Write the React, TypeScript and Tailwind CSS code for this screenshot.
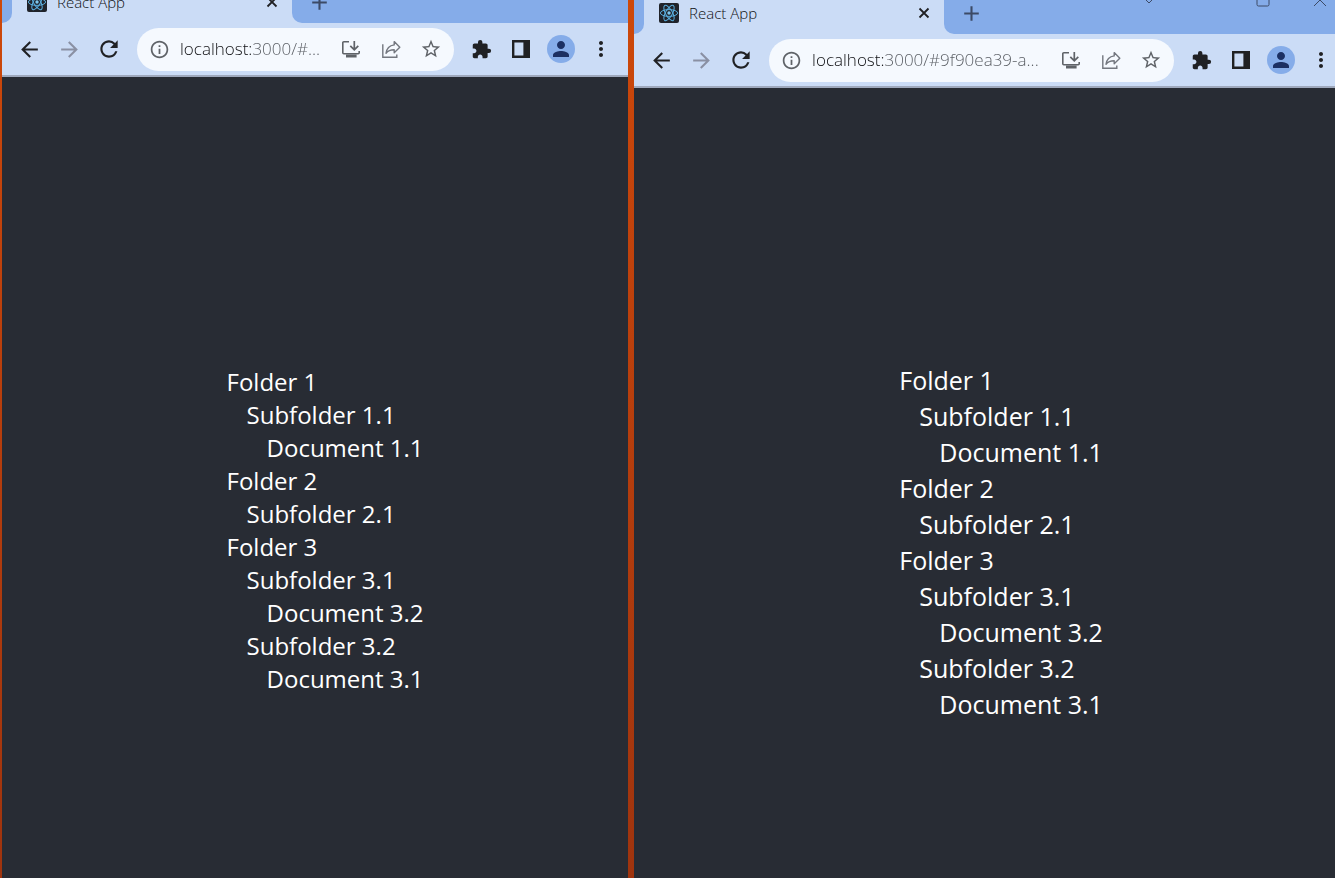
import type { ReactNode } from "react";
import {
  MdAdd,
  MdArrowBack,
  MdArrowForward,
  MdExtension,
  MdInfoOutline,
  MdMoreVert,
  MdPerson,
  MdRefresh,
  MdStarBorder,
} from "react-icons/md";

type Item = { name: string; children?: Item[] };

const tree: Item[] = [
  {
    name: "Folder 1",
    children: [{ name: "Subfolder 1.1", children: [{ name: "Document 1.1" }] }],
  },
  { name: "Folder 2", children: [{ name: "Subfolder 2.1" }] },
  {
    name: "Folder 3",
    children: [
      { name: "Subfolder 3.1", children: [{ name: "Document 3.2" }] },
      { name: "Subfolder 3.2", children: [{ name: "Document 3.1" }] },
    ],
  },
];

function Tree({ items, nested = false }: { items: Item[]; nested?: boolean }) {
  return (
    <ul className={nested ? "pl-5" : ""}>
      {items.map((item) => (
        <li key={item.name}>
          {item.name}
          {item.children && <Tree items={item.children} nested />}
        </li>
      ))}
    </ul>
  );
}

function ReactLogo() {
  return (
    <svg viewBox="0 0 20 20" className="size-5 shrink-0" aria-hidden="true">
      <rect width="20" height="20" rx="2" fill="#20232a" />
      <g fill="none" stroke="#5aaede" strokeWidth="1">
        <ellipse cx="10" cy="10" rx="8.6" ry="3.4" />
        <ellipse cx="10" cy="10" rx="8.6" ry="3.4" transform="rotate(60 10 10)" />
        <ellipse cx="10" cy="10" rx="8.6" ry="3.4" transform="rotate(120 10 10)" />
      </g>
      <circle cx="10" cy="10" r="1.7" fill="#7cc8f0" />
    </svg>
  );
}

function InstallIcon() {
  return (
    <svg viewBox="0 0 20 20" className="size-5" fill="none" stroke="currentColor" aria-hidden="true">
      <path d="M8 2.8H2.8a1 1 0 0 0-1 1v10a1 1 0 0 0 1 1h14.400a1 1 0 0 0 1-1V12" strokeWidth="1.6" />
      <path d="M13.3 2v8.2M9.3 6.8l4 4 4-4" strokeWidth="1.7" />
      <path d="M5 17h10.6" strokeWidth="3" />
    </svg>
  );
}

function ShareIcon() {
  return (
    <svg viewBox="0 0 20 20" className="size-5" fill="none" stroke="currentColor" strokeWidth="1.4" aria-hidden="true">
      <path d="M1.8 5.2v13h14v-2.6" />
      <path d="M13.2 2.6l5.6 5.7-5.6 5.4v-3c-3.6 0-6.2.8-8.2 3.6.6-4.6 3.4-7.7 8.2-8.4z" strokeLinejoin="round" />
    </svg>
  );
}

function SidePanelIcon() {
  return (
    <svg viewBox="0 0 18 18" className="size-[18px]" aria-hidden="true">
      <path fillRule="evenodd" d="M0 0h18v18H0zM2.4 2.6v12.8h9V2.6z" fill="currentColor" />
    </svg>
  );
}

function ToolButton({ label, children, className = "text-[#202124]" }: { label: string; children: ReactNode; className?: string }) {
  return (
    <button aria-label={label} className={`flex h-10 w-10 shrink-0 items-center justify-center ${className}`}>
      {children}
    </button>
  );
}

type BrowserProps = {
  url: string;
  tabClass: string;
  headerClass?: string;
  pageClass: string;
  controls?: boolean;
};

function Browser({ url, tabClass, headerClass = "", pageClass, controls = false }: BrowserProps) {
  return (
    <div className="flex min-w-0 flex-1 flex-col">
      <header className={`shrink-0 border-b-2 border-[#9fa9bd] bg-[#cbdcf6] ${headerClass}`}>
        <div className="flex h-[34px]">
          <div className="w-[10px] shrink-0 rounded-br-[10px] bg-[#85ace9]" />
          <div className={`flex h-[26px] shrink-0 items-center pl-[15px] pr-3 ${tabClass}`}>
            <ReactLogo />
            <span className="ml-[10px] flex-1 text-[15px] leading-[18px] font-light text-[#101114]">React App</span>
            <button aria-label="Close tab" className="text-[#202124]">
              <svg viewBox="0 0 16 16" className="size-4" fill="none" stroke="currentColor" strokeWidth="1.8" aria-hidden="true">
                <path d="M3.5 3.5l9 9M12.5 3.5l-9 9" />
              </svg>
            </button>
          </div>
          <div className="flex flex-1 rounded-bl-[10px] bg-[#85ace9] text-[#3c4a66]">
            <button aria-label="New tab" className="flex h-[26px] w-[54px] items-center justify-center">
              <MdAdd size={25} />
            </button>
            {controls && (
              <div className="ml-auto flex h-[7px] items-end">
                <button aria-label="Search tabs" className="w-[58px]">
                  <svg viewBox="0 0 10 7" className="mx-auto h-[7px] w-[10px]" fill="none" stroke="currentColor" aria-hidden="true">
                    <path d="M1.5-.5L5 3l3.5-3.5" />
                  </svg>
                </button>
                <button aria-label="Maximize" className="ml-14 w-[58px]">
                  <svg viewBox="0 0 14 7" className="mx-auto h-[7px] w-[14px]" fill="none" stroke="currentColor" aria-hidden="true">
                    <path d="M1-5v9.500a1.5 1.5 0 0 0 1.5 1.5h9A1.5 1.5 0 0 0 13 4.500V-5" />
                  </svg>
                </button>
                <button aria-label="Close window" className="w-14">
                  <svg viewBox="0 0 14 7" className="mx-auto h-[7px] w-[14px]" fill="none" stroke="currentColor" aria-hidden="true">
                    <path d="M1 6l7-7M13 6L6-1" />
                  </svg>
                </button>
              </div>
            )}
          </div>
        </div>
        <div className="flex h-[52px] items-center px-[7px]">
          <ToolButton label="Back"><MdArrowBack size={25} /></ToolButton>
          <ToolButton label="Forward" className="text-[#8a90a3]"><MdArrowForward size={25} /></ToolButton>
          <ToolButton label="Reload"><MdRefresh size={26} /></ToolButton>
          <div className="ml-2 mr-[7px] flex h-[43px] min-w-0 flex-1 items-center rounded-full bg-[#f5f9fe] pl-3 pr-[3px] text-[#5f6368]">
            <MdInfoOutline size={21} className="shrink-0" />
            <input
              aria-label="Address"
              defaultValue={url}
              className="ml-[10px] h-8 min-w-0 flex-1 bg-[linear-gradient(90deg,#101114_74px,#55595f_74px)] bg-clip-text text-[17px] leading-8 font-light text-transparent outline-none"
            />
            <ToolButton label="Install app" className="text-[#5f6368]"><InstallIcon /></ToolButton>
            <ToolButton label="Share" className="text-[#73777f]"><ShareIcon /></ToolButton>
            <ToolButton label="Bookmark" className="text-[#5f6368]"><MdStarBorder size={22} /></ToolButton>
          </div>
          <ToolButton label="Extensions"><MdExtension size={21} /></ToolButton>
          <ToolButton label="Side panel"><SidePanelIcon /></ToolButton>
          <ToolButton label="Profile" className="text-[#1b2f63]">
            <span className="flex size-7 items-center justify-center rounded-full bg-[#85ace9]">
              <MdPerson size={24} />
            </span>
          </ToolButton>
          <ToolButton label="Menu"><MdMoreVert size={24} /></ToolButton>
        </div>
      </header>
      <main className={`flex flex-1 items-center justify-center bg-[#282c34] pl-5 text-white ${pageClass}`}>
        <Tree items={tree} />
      </main>
    </div>
  );
}

export default function App() {
  return (
    <div className="flex h-screen overflow-hidden font-['Open_Sans','Noto_Sans',sans-serif]">
      <div className="w-[2px] shrink-0 bg-linear-to-b from-[#cd480a] to-[#9f340e]" />
      <section className="flex w-[46.9%] shrink-0 overflow-hidden">
        <Browser
          url="localhost:3000/#..."
          tabClass="w-[280px]"
          headerClass="-mt-[11px]"
          pageClass="pt-[105px] text-2xl leading-[33px]"
        />
      </section>
      <div className="w-[6px] shrink-0 bg-linear-to-b from-[#cd480a] to-[#9f340e]" />
      <section className="flex min-w-0 flex-1 overflow-hidden">
        <div className="-mr-[13px] flex min-w-0 flex-1">
          <Browser
            url="localhost:3000/#9f90ea39-a..."
            tabClass="w-[300px]"
            pageClass="pt-[118px] text-[25px] leading-9"
            controls
          />
        </div>
      </section>
    </div>
  );
}
